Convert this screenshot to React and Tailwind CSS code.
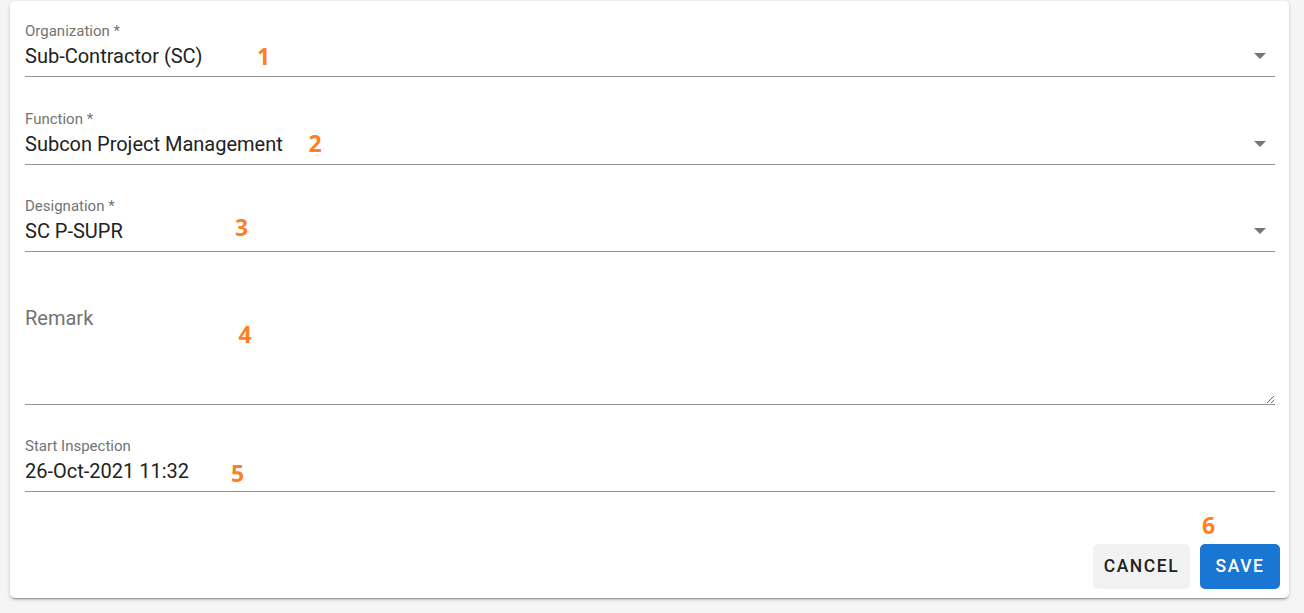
import React from "react";

const Arrow = () => (
  <svg
    className="w-[12px] h-[6px] self-start mt-[9px] mr-[9px] shrink-0"
    viewBox="7 10 10 5"
    preserveAspectRatio="none"
  >
    <path d="M7 10l5 5 5-5z" fill="#757575" />
  </svg>
);

function Field({ label, value, select, className = "" }) {
  return (
    <div className={className}>
      <div className="h-[18px] text-[15px] leading-[18px] text-[#737373] whitespace-nowrap">{label}</div>
      <div className="mt-[4px] flex border-b border-[#949494] pb-[7px]">
        <div className="flex-1 h-[25px] text-[20px] leading-[25px] text-[#222222] whitespace-nowrap">{value}</div>
        {select && <Arrow />}
      </div>
    </div>
  );
}

const Mark = ({ n, left, top }) => (
  <div
    className="absolute text-[23px] leading-[23px] font-bold text-[#ff7f27]"
    style={{ left, top, fontFamily: '"Open Sans", "Noto Sans", sans-serif' }}
  >
    {n}
  </div>
);

export default function App() {
  return (
    <div
      className="relative w-[1304px] h-[613px] bg-[#f5f5f5] overflow-hidden pt-[1px] pl-[10px]"
      style={{ fontFamily: 'Roboto, "Liberation Sans", sans-serif' }}
    >
      <div className="w-[1279px] h-[597px] bg-white rounded-[5px] shadow-[0_3px_1px_-2px_rgba(0,0,0,0.2),0_2px_2px_0_rgba(0,0,0,0.14),0_1px_5px_0_rgba(0,0,0,0.12)] flex flex-col pt-[21px] pl-[15px] pr-[14px]">
        <Field label="Organization *" value="Sub-Contractor (SC)" select />
        <Field className="mt-[33px]" label="Function *" value="Subcon Project Management" select />
        <Field className="mt-[32px]" label="Designation *" value="SC P-SUPR" select />
        <textarea
          className="mt-[34px] w-full h-[119px] pt-[20px] text-[20px] leading-[25px] text-[#222222] placeholder:text-[#737373] border-b border-[#949494] outline-none bg-transparent resize-y"
          placeholder="Remark"
          style={{ fontFamily: 'Roboto, "Liberation Sans", sans-serif' }}
        />
        <Field className="mt-[32px]" label="Start Inspection" value="26-Oct-2021 11:32" />
        <div className="mt-[52px] flex justify-end gap-[10px] -mr-[5px]">
          <button className="w-[97px] h-[45px] rounded-[5px] bg-[#f2f2f2] text-[#212121] text-[17.5px] font-medium tracking-[0.09em] flex items-center justify-center">
            CANCEL
          </button>
          <button className="w-[80px] h-[45px] rounded-[5px] bg-[#1976d2] text-white text-[17.5px] font-medium tracking-[0.09em] flex items-center justify-center">
            SAVE
          </button>
        </div>
      </div>
      <Mark n="1" left={257} top={45} />
      <Mark n="2" left={308.5} top={132} />
      <Mark n="3" left={235} top={216} />
      <Mark n="4" left={238.5} top={323} />
      <Mark n="5" left={231} top={462} />
      <Mark n="6" left={1202} top={514} />
    </div>
  );
}
